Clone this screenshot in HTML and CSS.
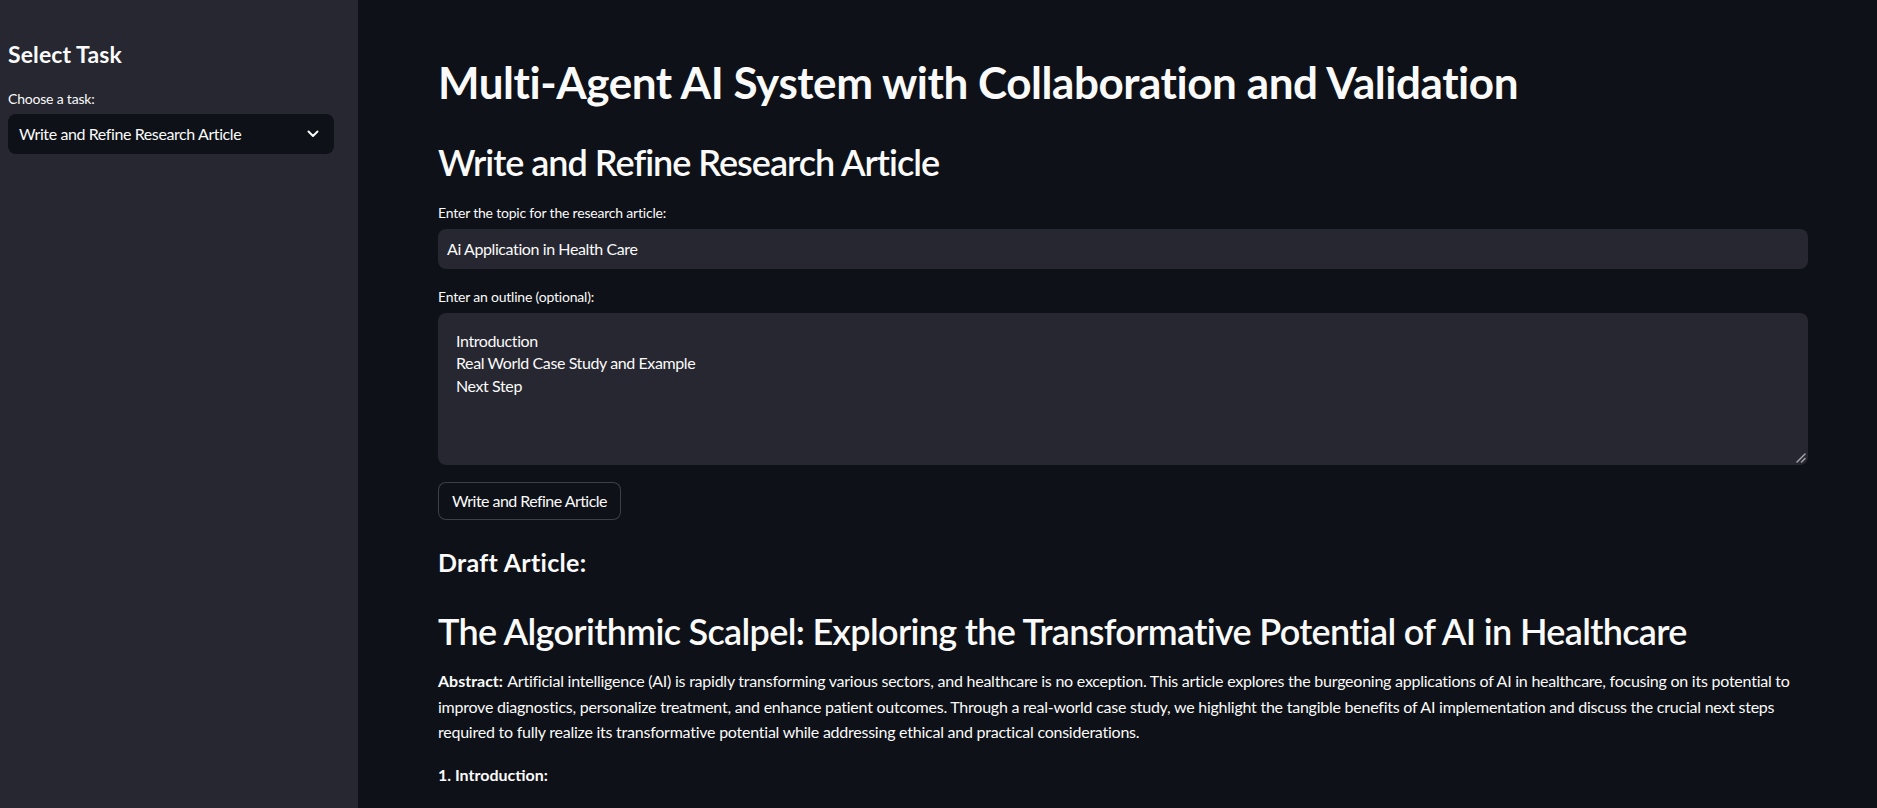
FILE: index.html
```html
<!DOCTYPE html>
<html lang="en">
<head>
<meta charset="utf-8">
<title>Multi-Agent AI System</title>
<link rel="stylesheet" href="styles.css">
</head>
<body>
<div class="app">
  <aside class="sidebar">
    <h2 class="side-title">Select Task</h2>
    <div class="widget-label side-label">Choose a task:</div>
    <div class="select">
      <span class="select-value">Write and Refine Research Article</span>
      <svg class="chevron" width="12" height="8" viewBox="0 0 12 8"><path d="M1.5 1.5 L6 6 L10.5 1.5" fill="none" stroke="#fafafa" stroke-width="2" stroke-linecap="round" stroke-linejoin="round"/></svg>
    </div>
  </aside>
  <main class="main">
    <h1 class="page-title">Multi-Agent AI System with Collaboration and Validation</h1>
    <h2 class="section-title">Write and Refine Research Article</h2>
    <div class="widget-label label-topic">Enter the topic for the research article:</div>
    <div class="text-input">Ai Application in Health Care</div>
    <div class="widget-label label-outline">Enter an outline (optional):</div>
    <div class="text-area">
      <div class="ta-line">Introduction</div>
      <div class="ta-line">Real World Case Study and Example</div>
      <div class="ta-line">Next Step</div>
      <svg class="grip" width="10" height="10" viewBox="0 0 10 10"><path d="M1 9 L9 1 M5.5 9 L9 5.5" stroke="#a3a3a8" stroke-width="1.5" stroke-linecap="round"/></svg>
    </div>
    <div class="btn-row"><div class="button">Write and Refine Article</div></div>
    <h4 class="draft-title">Draft Article:</h4>
    <h2 class="article-title">The Algorithmic Scalpel: Exploring the Transformative Potential of AI in Healthcare</h2>
    <p class="abstract"><strong class="lead">Abstract:</strong> Artificial intelligence (AI) is rapidly transforming various sectors, and healthcare is no exception. This article explores the burgeoning applications of AI in healthcare, focusing on its potential to improve diagnostics, personalize treatment, and enhance patient outcomes. Through a real-world case study, we highlight the tangible benefits of AI implementation and discuss the crucial next steps required to fully realize its transformative potential while addressing ethical and practical considerations.</p>
    <p class="intro"><strong>1. Introduction:</strong></p>
  </main>
</div>
</body>
</html>
```
FILE: styles.css
```css
html, body {
  margin: 0;
  padding: 0;
  height: 100%;
}
body {
  background: #0e1117;
  color: #fafafa;
  font-family: Lato, "Noto Sans", sans-serif;
  font-size: 16px;
  letter-spacing: -0.24px;
  overflow: hidden;
}
.app {
  display: flex;
  height: 808px;
}
.sidebar {
  width: 358px;
  flex: none;
  background: #262730;
  box-sizing: border-box;
  padding: 41px 24px 0 8px;
  display: flex;
  flex-direction: column;
}
.side-title {
  margin: 0;
  font-size: 23px;
  font-weight: 700;
  line-height: 1.2;
  letter-spacing: 0.1px;
}
.widget-label {
  font-size: 14px;
  line-height: 24px;
  letter-spacing: -0.2px;
}
.side-label {
  margin-top: 18px;
}
.select {
  margin-top: 3px;
  height: 40px;
  background: #0e1117;
  border-radius: 8px;
  display: flex;
  align-items: center;
  justify-content: space-between;
  padding: 0 15px 0 11px;
}
.select-value {
  font-size: 16px;
  letter-spacing: -0.4px;
}
.chevron {
  display: block;
}
.main {
  flex: 1;
  box-sizing: border-box;
  padding: 56px 69px 0 80px;
  display: flex;
  flex-direction: column;
  min-width: 0;
}
.page-title {
  margin: 0;
  font-size: 44px;
  font-weight: 700;
  line-height: 1.2;
  letter-spacing: -0.44px;
}
.section-title {
  margin: 32px 0 0;
  font-size: 36px;
  font-weight: 600;
  line-height: 1.2;
  letter-spacing: -1px;
}
.label-topic {
  margin-top: 17px;
}
.text-input {
  margin-top: 4px;
  height: 40px;
  box-sizing: border-box;
  background: #262730;
  border-radius: 8px;
  display: flex;
  align-items: center;
  padding-left: 9px;
  letter-spacing: -0.4px;
}
.label-outline {
  margin-top: 16px;
}
.text-area {
  position: relative;
  margin-top: 4px;
  height: 152px;
  box-sizing: border-box;
  background: #262730;
  border-radius: 8px;
  padding: 17px 18px;
  line-height: 22.5px;
  letter-spacing: -0.4px;
}
.grip {
  position: absolute;
  right: 2px;
  bottom: 2px;
}
.btn-row {
  display: flex;
  margin-top: 17px;
}
.button {
  height: 38px;
  box-sizing: border-box;
  border: 1px solid rgba(250, 250, 250, 0.2);
  border-radius: 8px;
  display: flex;
  align-items: center;
  padding: 0 13px;
  background: #0e1117;
  letter-spacing: -0.55px;
}
.draft-title {
  margin: 27px 0 0;
  font-size: 25px;
  font-weight: 700;
  line-height: 1.2;
  letter-spacing: 0.3px;
}
.article-title {
  margin: 33px 0 0;
  font-size: 36px;
  font-weight: 600;
  line-height: 1.2;
  letter-spacing: -0.67px;
}
.abstract {
  margin: 15px 0 0;
  line-height: 25.6px;
}
.intro {
  margin: 17px 0 0;
  line-height: 25.6px;
}
strong {
  font-weight: 700;
  letter-spacing: 0;
}
.lead {
  margin-right: 1px;
}
```
